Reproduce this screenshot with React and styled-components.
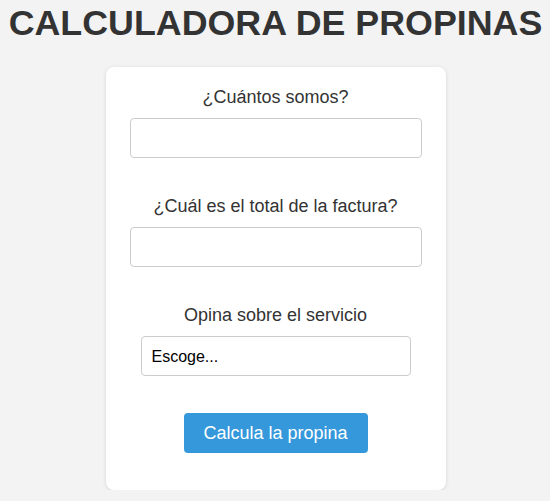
import React from 'react'
import styled, { createGlobalStyle } from 'styled-components';

const GlobalStyle = createGlobalStyle`
body {
  margin: 0;
  background: #f3f3f3;
  font-family: "Liberation Sans", Arial, sans-serif;
  color: #333;
}
`

export const Page = styled.div`
display: flex;
flex-direction: column;
align-items: center;
padding-left: 1px;
`

export const Title = styled.h1`
margin: 0;
padding-top: 2px;
font-size: 35.8px;
font-weight: bold;
line-height: 42px;
color: #333;
white-space: nowrap;
`

export const Card = styled.form`
margin-top: 23px;
width: 340px;
box-sizing: border-box;
background: #fff;
border-radius: 8px;
box-shadow: 0 1px 4px rgba(0, 0, 0, 0.12);
padding: 19px 24px 37px;
display: flex;
flex-direction: column;
align-items: center;
`

export const Field = styled.div`
width: 100%;
display: flex;
flex-direction: column;
align-items: center;
gap: 10px;
margin-bottom: ${p => p.$space || 37}px;
`

export const Label = styled.label`
font-size: 18px;
line-height: 22px;
color: #333;
`

export const Input = styled.input`
width: 100%;
height: 40px;
box-sizing: border-box;
border: 1px solid #ccc;
border-radius: 4px;
background: #fff;
font-family: inherit;
font-size: 16px;
padding: 0 10px;
`

export const Select = styled.select`
width: 270px;
height: 40px;
box-sizing: border-box;
border: 1px solid #ccc;
border-radius: 4px;
background: #fff;
appearance: none;
font-family: "Liberation Sans", Arial, sans-serif;
font-size: 16px;
color: #000;
padding: 0 10px;
`

export const Button = styled.button`
width: 184px;
height: 40px;
border: none;
border-radius: 4px;
background: #3498db;
color: #fff;
font-family: inherit;
font-size: 18px;
cursor: pointer;
`

const App = () => {
    return (
        <>
        <GlobalStyle />
        <Page>
            <Title>CALCULADORA DE PROPINAS</Title>
            <Card onSubmit={e => e.preventDefault()}>
                <Field>
                    <Label>¿Cuántos somos?</Label>
                    <Input type="text" />
                </Field>
                <Field>
                    <Label>¿Cuál es el total de la factura?</Label>
                    <Input type="text" />
                </Field>
                <Field $space={37}>
                    <Label>Opina sobre el servicio</Label>
                    <Select defaultValue="">
                        <option value="">Escoge...</option>
                        <option value="0.3">Excelente</option>
                        <option value="0.2">Bueno</option>
                        <option value="0.15">Regular</option>
                        <option value="0.1">Malo</option>
                    </Select>
                </Field>
                <Button type="submit">Calcula la propina</Button>
            </Card>
        </Page>
        </>
    )
}

export default App
